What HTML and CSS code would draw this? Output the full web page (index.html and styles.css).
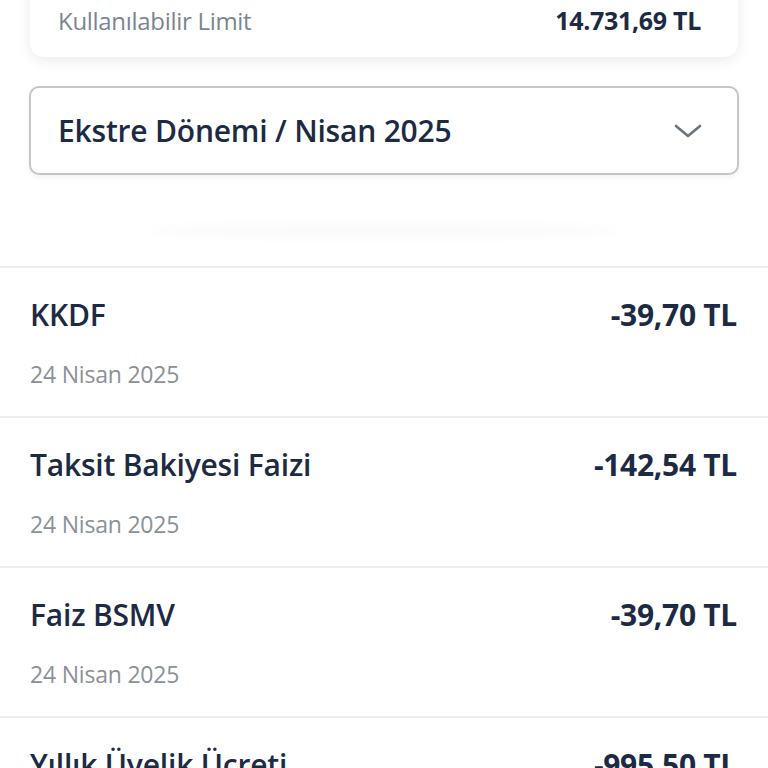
FILE: index.html
```html
<!DOCTYPE html>
<html lang="tr">
<head>
<meta charset="utf-8">
<link rel="stylesheet" href="styles.css">
</head>
<body>
<div class="page">
  <div class="limit-card">
    <span class="limit-label">Kullanılabilir Limit</span>
    <span class="limit-value">14.731,69 TL</span>
  </div>
  <div class="select">
    <span class="select-text">Ekstre Dönemi / Nisan 2025</span>
    <svg class="chevron" width="30" height="18" viewBox="0 0 30 18"><path d="M3 4 L15 14 L27 4" fill="none" stroke="#6b7480" stroke-width="2.6" stroke-linecap="round" stroke-linejoin="round"/></svg>
  </div>
  <div class="shade"></div>
  <ul class="list">
    <li class="row">
      <div class="row-top"><span class="title">KKDF</span><span class="amount">-39,70 TL</span></div>
      <span class="date">24 Nisan 2025</span>
    </li>
    <li class="row">
      <div class="row-top"><span class="title">Taksit Bakiyesi Faizi</span><span class="amount">-142,54 TL</span></div>
      <span class="date">24 Nisan 2025</span>
    </li>
    <li class="row">
      <div class="row-top"><span class="title">Faiz BSMV</span><span class="amount">-39,70 TL</span></div>
      <span class="date">24 Nisan 2025</span>
    </li>
    <li class="row">
      <div class="row-top"><span class="title">Yıllık Üyelik Ücreti</span><span class="amount">-995,50 TL</span></div>
      <span class="date">24 Nisan 2025</span>
    </li>
  </ul>
</div>
</body>
</html>
```
FILE: styles.css
```css
* { box-sizing: border-box; }
html, body { margin: 0; padding: 0; background: #ffffff; }
body { font-family: "Open Sans", "Noto Sans", sans-serif; color: #1d2a44; overflow: hidden; height: 768px; }
.page { display: flex; flex-direction: column; }
.limit-card {
  margin: -20px 30px 0 30px;
  height: 77px;
  background: #fff;
  border-radius: 0 0 14px 14px;
  box-shadow: 0 4px 14px rgba(0,0,0,0.08);
  display: flex;
  justify-content: space-between;
  align-items: center;
  padding: 3px 37px 0 28px;
}
.limit-label { font-size: 24px; font-weight: 500; color: #7b8591; letter-spacing: -0.3px; }
.limit-value { font-size: 25px; font-weight: 700; color: #1d2a44; letter-spacing: -0.3px; }
.select {
  margin: 29px 29px 0 29px;
  height: 89px;
  border: 2px solid #c3c6ca;
  border-radius: 10px;
  box-shadow: 0 2px 6px rgba(0,0,0,0.06);
  display: flex;
  align-items: center;
  justify-content: space-between;
  padding: 0 34px 0 27px;
}
.select-text { font-size: 30px; font-weight: 600; color: #1d2a44; letter-spacing: -0.2px; }
.chevron { display: block; }
.shade {
  margin: 50px 150px 0 150px;
  height: 12px;
  border-radius: 50%;
  background: rgba(0,0,0,0.025);
  filter: blur(5px);
}
.list { list-style: none; margin: 29px 0 0 0; padding: 0; border-top: 2px solid #ebedef; }
.row {
  height: 150px;
  border-bottom: 2px solid #ebedef;
  padding: 26px 31px 0 30px;
  display: flex;
  flex-direction: column;
  gap: 23px;
}
.row-top { display: flex; justify-content: space-between; align-items: center; }
.title { font-size: 30px; font-weight: 600; color: #1d2a44; letter-spacing: -0.2px; }
.amount { font-size: 30px; font-weight: 700; color: #1d2a44; letter-spacing: -0.3px; }
.date { font-size: 23px; font-weight: 500; color: #8a9199; letter-spacing: -0.2px; }
```
